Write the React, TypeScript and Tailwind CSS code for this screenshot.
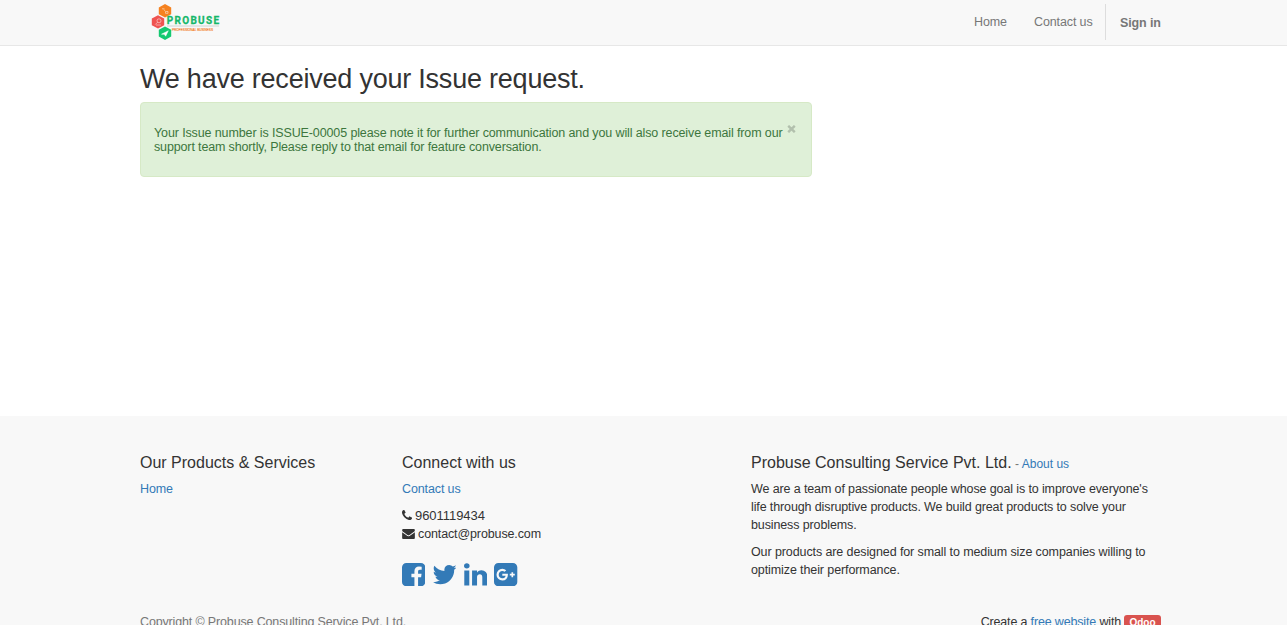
import React from "react";

const icons = {
  phone: "M1600 1240q0 27-10 70.5t-21 68.5q-21 50-122 106-94 51-186 51-27 0-53-3.5t-57.5-12.5-47-14.5-55.5-20.5-49-18q-98-35-175-83-127-79-264-216t-216-264q-48-77-83-175-3-9-18-49t-20.5-55.5-14.5-47-12.5-57.5-3.5-53q0-92 51-186 56-101 106-122 25-11 68.5-21t70.5-10q14 0 21 3 18 6 53 76 11 19 30 54t35 63.5 31 53.5q3 4 17.5 25t21.5 35.5 7 28.5q0 20-28.5 50t-62 55-62 53-28.5 46q0 9 5 22.5t8.5 20.5 14 24 11.5 19q76 137 174 235t235 174q2 1 19 11.5t24 14 20.5 8.5 22.5 5q18 0 46-28.5t53-62 55-62 50-28.5q14 0 28.5 7t35.5 21.5 25 17.5q25 15 53.5 31t63.5 35 54 30q70 35 76 53 3 7 3 21z",
  envelope: "M1792 710v794q0 66-47 113t-113 47h-1472q-66 0-113-47t-47-113v-794q44 49 101 87 362 246 497 345 57 42 92.5 65.5t94.5 48 110 24.5h2q51 0 110-24.5t94.5-48 92.5-65.5q170-123 498-345 57-39 100-87zm0-294q0 79-49 151t-122 123q-376 261-468 325-10 7-42.5 31t-54 38.8-52 33.2-57.5 27.5-50 9h-2q-23 0-50-9t-57.5-27.5-52-33.2-54-38.8-42.5-31q-91-64-262-182.5t-205-142.5q-62-42-117-115.5t-55-136.5q0-78 41.5-130t118.5-52h1472q65 0 112.5 47t47.5 113z",
  facebook: "M1376 128q119 0 203.5 84.5t84.5 203.5v960q0 119-84.5 203.5t-203.5 84.5h-188v-595h199l30-232h-229v-148q0-56 23.5-84t91.5-28l122-1v-207q-63-9-178-9-136 0-217.5 80t-81.5 226v171h-200v232h200v595h-532q-119 0-203.5-84.5t-84.5-203.5v-960q0-119 84.5-203.5t203.5-84.5h960z",
  twitter: "M1684 408q-67 98-162 167 1 14 1 42 0 130-38 259.5t-115.5 248.5-184.5 210.5-258 146-323 54.5q-271 0-496-145 35 4 78 4 225 0 401-138-105-2-188-64.5t-114-159.5q33 5 61 5 43 0 85-11-112-23-185.5-111.5t-73.5-205.5v-4q68 38 146 41-66-44-105-115t-39-154q0-88 44-163 121 149 294.5 238.5t371.5 99.5q-8-38-8-74 0-134 94.5-228.5t228.5-94.5q140 0 236 102 109-21 205-78-37 115-142 178 93-10 186-50z",
  linkedin: "M477 625v991h-330v-991h330zm21-306q1 73-50.5 122t-135.5 49h-2q-82 0-132-49t-50-122q0-74 51.5-122.5t134.5-48.5 133 48.5 51 122.5zm1166 729v568h-329v-530q0-105-40.5-164.5t-126.5-59.5q-63 0-105.5 34.5t-63.5 85.5q-11 30-11 81v553h-329q2-399 2-647t-1-296l-1-48h329v144h-2q20-32 41-56t56.5-52 87-43.5 114.5-15.5q171 0 275 113.5t104 332.5z",
  google: "M1045 905q0-26-6-64h-362v132h217q-3 24-16.5 50t-37.5 53-66.5 44.5-96.5 17.5q-99 0-169-71t-70-171 70-171 169-71q92 0 153 59l104-101q-108-100-257-100-160 0-272 112.5t-112 271.5 112 271.5 272 112.5q165 0 266.5-105t101.5-270zm345 46h109v-110h-109v-110h-110v110h-110v110h110v110h110v-110zm274-535v960q0 119-84.5 203.5t-203.5 84.5h-960q-119 0-203.5-84.5t-84.5-203.5v-960q0-119 84.5-203.5t203.5-84.5h960q119 0 203.5 84.5t84.5 203.5z",
};

function Icon({ d, viewBox, className }: { d: string; viewBox: string; className: string }) {
  return (
    <svg viewBox={viewBox} className={className} fill="currentColor" aria-hidden="true">
      <path d={d} />
    </svg>
  );
}

function Logo() {
  return (
    <svg viewBox="0 0 80 46" className="h-[46px] w-20">
      <polygon points="25,4 31.2,7.4 31.2,14.2 25,17.6 18.8,14.2 18.8,7.4" fill="#f58220" />
      <polygon points="18,15.2 24.2,18.6 24.2,25.2 18,28.6 11.8,25.2 11.8,18.6" fill="#ef5350" />
      <polygon points="25,26.4 31.2,29.8 31.2,36.6 25,40 18.8,36.6 18.8,29.8" fill="#14c971" />
      <g fill="none" stroke="#fff" strokeOpacity=".6" strokeWidth=".8">
        <path d="M22 8.8h2.5M24 9.5l1 1.5M25.5 11.5h2.5v1.8h-2.5z" />
        <circle cx="19" cy="20.8" r="2" />
        <path d="M17.6 22.2l-2.4 2.4M16 25h5" />
        <path d="M21.5 34.2l6.8-3.4-2.6 5.4-1.5-2z" fill="#fff" />
      </g>
      <path d="M27 26h52" stroke="#c5cbc8" strokeWidth=".8" />
      <text x="26.8" y="24.3" textLength="52.2" fill="#16b76a" stroke="#16b76a" strokeWidth=".3" fontSize="10" fontWeight="700" fontFamily="Roboto, sans-serif">PROBUSE</text>
      <text x="32" y="31" textLength="41" lengthAdjust="spacingAndGlyphs" fill="#f47a22" stroke="#f47a22" strokeWidth=".15" fontSize="4" fontFamily="Liberation Sans, sans-serif">PROFESSIONAL BUSINESS</text>
    </svg>
  );
}

export default function App() {
  return (
    <div className="flex h-[625px] w-full flex-col overflow-hidden bg-white font-['Liberation_Sans',Arial,sans-serif] text-[12.5px] leading-[18px] tracking-[-0.12px] text-[#333]">
      <header className="h-[46px] shrink-0 border-b border-[#e7e7e7] bg-[#f8f8f8]">
        <div className="ml-[140px] flex h-[45px] w-[1021px] items-start justify-between whitespace-nowrap text-[#777]">
          <a className="block tracking-normal"><Logo /></a>
          <nav className="flex pt-1">
            <a className="w-[60px] pt-[9px]">Home</a>
            <a className="w-[71px] pt-[9px]">Contact us</a>
            <a className="h-9 w-14 border-l border-[#ddd] pl-[14px] pt-[10px] font-bold">Sign in</a>
          </nav>
        </div>
      </header>
      <main className="ml-[140px] h-[370px] w-[672px] shrink-0">
        <h1 className="h-[56px] whitespace-nowrap pt-[17px] text-[27px] leading-8 tracking-[-0.22px]">We have received your Issue request.</h1>
        <div className="flex h-[75px] rounded-[4px] border border-[#d6e9c6] bg-[#dff0d8] pl-[13px] text-[#3c763d]">
          <p className="w-[633px] whitespace-nowrap pt-[23px] leading-[14px]">
            Your Issue number is ISSUE-00005 please note it for further communication and you will also receive email from our
            <br />
            <span className="tracking-[-0.14px]">support team shortly, Please reply to that email for feature conversation.</span>
          </p>
          <button aria-label="Close" className="mt-[22px] h-2 w-[9px]">
            <svg viewBox="0 0 9 8" className="h-2 w-[9px]" stroke="#b2c0ad" strokeWidth="2.4"><path d="M1.2 .8l6.6 6.4M7.8 .8L1.2 7.2" /></svg>
          </button>
        </div>
      </main>
      <footer className="h-[209px] shrink-0 bg-[#f8f8f8]">
        <div className="ml-[140px] grid h-[197px] w-[1021px] grid-cols-[262px_349px_410px] whitespace-nowrap pt-[37px]">
          <section>
            <h4 className="mb-[8px] text-[16px] leading-[19px] tracking-normal">Our Products &amp; Services</h4>
            <a className="block text-[#337ab7]">Home</a>
          </section>
          <section>
            <h4 className="mb-[8px] text-[16px] leading-[19px] tracking-normal">Connect with us</h4>
            <a className="block text-[#337ab7]">Contact us</a>
            <ul className="mt-[9px]">
              <li className="flex items-center gap-[3px] text-[13px] tracking-[-0.05px]"><Icon d={icons.phone} viewBox="192 128 1408 1408" className="mb-[2px] size-[10px]" />9601119434</li>
              <li className="flex items-center gap-[3px]"><Icon d={icons.envelope} viewBox="0 256 1792 1408" className="h-[10px] w-[13px]" />contact@probuse.com</li>
            </ul>
            <div className="mt-5 flex gap-[7.5px] text-[#337ab7]">
              <Icon d={icons.facebook} viewBox="128 128 1536 1536" className="size-[23.3px]" />
              <Icon d={icons.twitter} viewBox="128 128 1536 1536" className="size-[23.3px]" />
              <Icon d={icons.linkedin} viewBox="128 128 1536 1536" className="size-[23.3px]" />
              <Icon d={icons.google} viewBox="128 128 1536 1536" className="size-[23.3px]" />
            </div>
          </section>
          <section>
            <h4 className="mb-[8px] h-[19px] text-[16px] leading-[19px] tracking-normal">
              Probuse Consulting Service Pvt. Ltd. <small className="-ml-px text-[12px] text-[#777]">- <a className="text-[#337ab7]">About us</a></small>
            </h4>
            <p>We are a team of passionate people whose goal is to improve everyone's<br />life through disruptive products. We build great products to solve your<br />business problems.</p>
            <p className="mt-[9px] tracking-[-0.1px]">Our products are designed for small to medium size companies willing to<br />optimize their performance.</p>
          </section>
        </div>
        <div className="ml-[140px] flex w-[1021px] justify-between whitespace-nowrap">
          <span className="tracking-[-0.15px] text-[#777]">Copyright © Probuse Consulting Service Pvt. Ltd.</span>
          <span className="flex tracking-[-0.16px]">
            Create a&nbsp;<a className="text-[#337ab7]">free website</a>&nbsp;with
            <a className="ml-[3px] mt-[2px] h-[14px] w-[37px] rounded-[3px] bg-[#d9534f] text-center text-[10px] font-bold leading-[16px] tracking-normal text-white">Odoo</a>
          </span>
        </div>
      </footer>
    </div>
  );
}
